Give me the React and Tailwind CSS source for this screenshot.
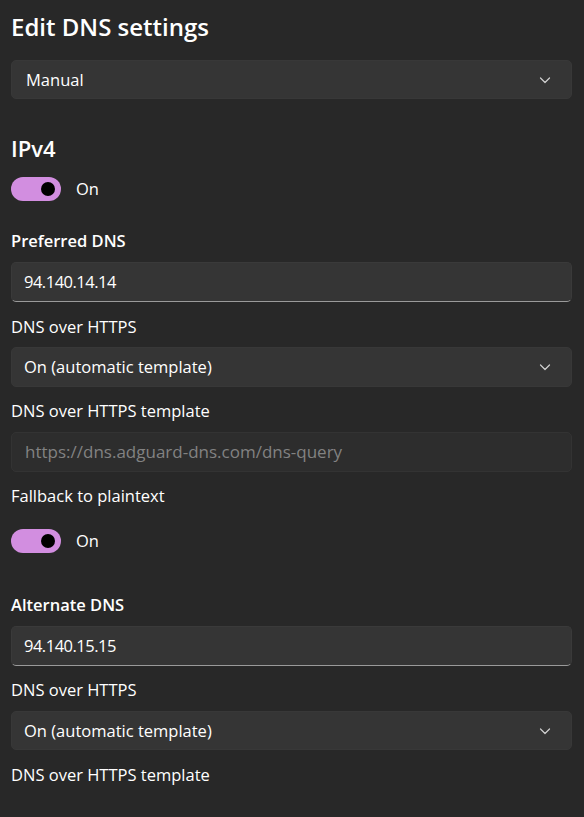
import React from "react";

const font = { fontFamily: '"Open Sans", "Noto Sans", sans-serif' };

function Chevron() {
  return (
    <svg width="12" height="12" viewBox="0 0 12 12" className="shrink-0">
      <path d="M1.5 4 L6 8.5 L10.5 4" fill="none" stroke="#d0d0d0" strokeWidth="1.2" strokeLinecap="round" strokeLinejoin="round" />
    </svg>
  );
}

function Dropdown({ value, className = "", pl = "pl-[12px]" }) {
  return (
    <div className={`flex h-[39px] items-center justify-between rounded-[5px] border border-[#383838] bg-[#353535] ${pl} pr-[20px] ${className}`}>
      <span className="text-[16.5px] leading-[20px] text-white">{value}</span>
      <Chevron />
    </div>
  );
}

function TextBox({ value, className = "" }) {
  return (
    <div className={`flex h-[40px] items-center rounded-[5px] border border-[#3a3a3a] border-b-[#9a9a9a] bg-[#353535] pl-[12px] ${className}`}>
      <span className="text-[16.5px] leading-[20px] tracking-[-0.5px] text-white">{value}</span>
    </div>
  );
}

function Toggle({ className = "" }) {
  return (
    <div className={`flex items-center ${className}`}>
      <div className="flex h-[24px] w-[50px] items-center justify-end rounded-full bg-[#d28ee0] pr-[6px]">
        <div className="h-[14px] w-[14px] rounded-full bg-black" />
      </div>
      <span className="ml-[15px] text-[16.5px] leading-[20px] text-white">On</span>
    </div>
  );
}

function Label({ children, className = "" }) {
  return <div className={`text-[16.5px] leading-[20px] text-white ${className}`}>{children}</div>;
}

function Heading({ children, className = "" }) {
  return <div className={`text-[16.5px] font-semibold leading-[22px] text-white ${className}`}>{children}</div>;
}

export default function App() {
  return (
    <div className="h-[817px] w-[584px] overflow-hidden bg-[#282828]" style={font}>
      <div className="flex flex-col pl-[11px] pr-[12px] pt-[13px]">
        <div className="text-[24px] font-semibold leading-[28px] text-white">Edit DNS settings</div>
        <Dropdown value="Manual" className="mt-[19px]" pl="pl-[14px]" />
        <div className="mt-[35px] text-[22px] font-semibold leading-[28px] text-white">IPv4</div>
        <Toggle className="mt-[15px]" />
        <Heading className="mt-[29px]">Preferred DNS</Heading>
        <TextBox value="94.140.14.14" className="mt-[10px]" />
        <Label className="mt-[15px]">DNS over HTTPS</Label>
        <Dropdown value="On (automatic template)" className="mt-[10px] h-[40px]" />
        <Label className="mt-[14px]">DNS over HTTPS template</Label>
        <div className="mt-[11px] flex h-[40px] items-center rounded-[5px] border border-[#333333] bg-[#2d2d2d] pl-[13px]">
          <span className="text-[17px] leading-[20px] text-[#828282]">https://dns.adguard-dns.com/dns-query</span>
        </div>
        <Label className="mt-[14px]">Fallback to plaintext</Label>
        <Toggle className="mt-[23px]" />
        <Heading className="mt-[41px]">Alternate DNS</Heading>
        <TextBox value="94.140.15.15" className="mt-[10px]" />
        <Label className="mt-[14px]">DNS over HTTPS</Label>
        <Dropdown value="On (automatic template)" className="mt-[11px]" />
        <Label className="mt-[15px]">DNS over HTTPS template</Label>
      </div>
    </div>
  );
}
